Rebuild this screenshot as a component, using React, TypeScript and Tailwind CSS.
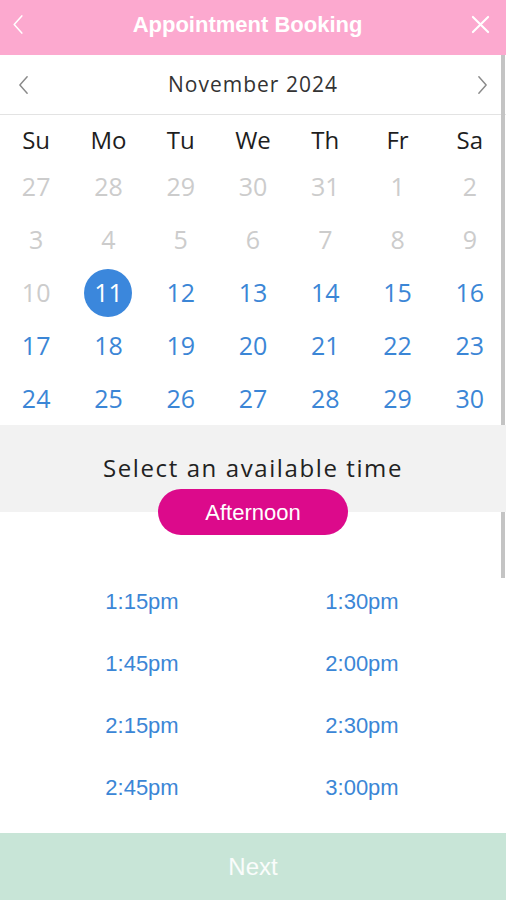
import React from "react";

const weekDays = ["Su", "Mo", "Tu", "We", "Th", "Fr", "Sa"];

// calendar grid: [label, muted]
const weeks: [number, boolean][][] = [
  [[27, true], [28, true], [29, true], [30, true], [31, true], [1, true], [2, true]],
  [[3, true], [4, true], [5, true], [6, true], [7, true], [8, true], [9, true]],
  [[10, true], [11, false], [12, false], [13, false], [14, false], [15, false], [16, false]],
  [[17, false], [18, false], [19, false], [20, false], [21, false], [22, false], [23, false]],
  [[24, false], [25, false], [26, false], [27, false], [28, false], [29, false], [30, false]],
];

const times = ["1:15pm", "1:30pm", "1:45pm", "2:00pm", "2:15pm", "2:30pm", "2:45pm", "3:00pm"];

const SELECTED = 11;

function Chevron({ dir, className }: { dir: "left" | "right"; className?: string }) {
  return (
    <svg viewBox="0 0 12 22" className={className} fill="none" stroke="currentColor" strokeWidth="1.6" strokeLinecap="round" strokeLinejoin="round">
      {dir === "left" ? <path d="M10 2 L2 11 L10 20" /> : <path d="M2 2 L10 11 L2 20" />}
    </svg>
  );
}

export default function App() {
  return (
    <div className="relative flex h-[900px] w-full flex-col overflow-hidden bg-white">
      {/* Header */}
      <div className="flex h-[55px] shrink-0 items-center justify-between bg-[#fca9cf] px-[12px] pb-[6px] text-white">
        <Chevron dir="left" className="h-[21px] w-[12px]" />
        <span className="font-['Liberation_Sans',Arial,sans-serif] text-[22px] font-bold">
          Appointment Booking
        </span>
        <svg viewBox="0 0 20 20" className="mr-[4px] h-[19px] w-[19px]" fill="none" stroke="currentColor" strokeWidth="2.2" strokeLinecap="round">
          <path d="M2 2 L18 18 M18 2 L2 18" />
        </svg>
      </div>

      {/* Month switcher */}
      <div className="flex h-[60px] shrink-0 items-center justify-between border-b border-[#e3e3e3] px-[18px] text-[#8a8a8a]">
        <Chevron dir="left" className="h-[20px] w-[11px]" />
        <span className="font-['Open_Sans',sans-serif] text-[21px] tracking-[1px] text-[#333]">
          November 2024
        </span>
        <Chevron dir="right" className="h-[20px] w-[11px]" />
      </div>

      {/* Week days */}
      <div className="grid h-[45px] shrink-0 grid-cols-7 items-center pt-[5px] font-['Open_Sans',sans-serif] text-[24px] text-[#1e1e1e]">
        {weekDays.map((d) => (
          <div key={d} className="text-center leading-[30px]">
            {d}
          </div>
        ))}
      </div>

      {/* Dates */}
      <div className="shrink-0 font-['Open_Sans',sans-serif] text-[25px]">
        {weeks.map((week, i) => (
          <div key={i} className="grid h-[53px] grid-cols-7 items-center">
            {week.map(([n, muted], j) => {
              const selected = !muted && n === SELECTED;
              return (
                <div key={j} className="flex justify-center">
                  {selected ? (
                    <span className="flex h-[48px] w-[48px] items-center justify-center rounded-full bg-[#3b87dc] text-white">
                      {n}
                    </span>
                  ) : (
                    <span className={muted ? "text-[#cccccc]" : "text-[#3b86d6]"}>{n}</span>
                  )}
                </div>
              );
            })}
          </div>
        ))}
      </div>

      {/* Time header */}
      <div className="relative z-10 mb-[-23px] flex h-[87px] shrink-0 flex-col items-center bg-[#f2f2f2] pt-[29px]">
        <span className="font-['Open_Sans',sans-serif] text-[24px] leading-[28px] tracking-[1.6px] text-[#222]">
          Select an available time
        </span>
        <button className="mt-[7px] flex h-[46px] w-[190px] shrink-0 items-center justify-center rounded-full bg-[#dc0a8b] font-['Liberation_Sans',Arial,sans-serif] text-[22px] text-white">
          Afternoon
        </button>
      </div>

      {/* Times */}
      <div className="grid flex-1 grid-cols-2 content-start px-[32px] pt-[81px] pr-[34px] font-['Liberation_Sans',Arial,sans-serif] text-[22px] text-[#3b86d6]">
        {times.map((t) => (
          <div key={t} className="flex h-[62px] items-center justify-center">
            {t}
          </div>
        ))}
      </div>

      {/* Next */}
      <div className="flex h-[67px] shrink-0 items-center justify-center bg-[#c8e5d7] font-['Liberation_Sans',Arial,sans-serif] text-[24px] text-white/90">
        Next
      </div>

      {/* Scroll indicator */}
      <div className="absolute right-[1px] top-[55px] h-[523px] w-[4px] bg-[#c4c4c4]" />
    </div>
  );
}
